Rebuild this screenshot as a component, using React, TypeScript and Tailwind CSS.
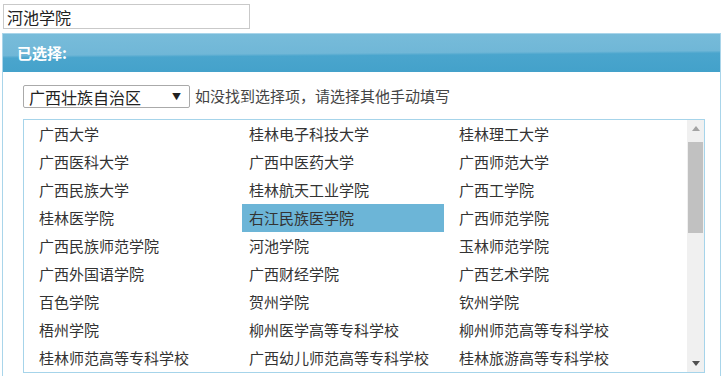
import { useState } from "react";

const SCHOOLS = [
  "广西大学", "桂林电子科技大学", "桂林理工大学",
  "广西医科大学", "广西中医药大学", "广西师范大学",
  "广西民族大学", "桂林航天工业学院", "广西工学院",
  "桂林医学院", "右江民族医学院", "广西师范学院",
  "广西民族师范学院", "河池学院", "玉林师范学院",
  "广西外国语学院", "广西财经学院", "广西艺术学院",
  "百色学院", "贺州学院", "钦州学院",
  "梧州学院", "柳州医学高等专科学校", "柳州师范高等专科学校",
  "桂林师范高等专科学校", "广西幼儿师范高等专科学校", "桂林旅游高等专科学校",
];

function Scrollbar() {
  return (
    <div className="w-[17px] shrink-0 bg-[#f0f0f0] flex flex-col items-center">
      <div className="h-[17px] w-full flex items-center justify-center">
        <svg width="8" height="5" viewBox="0 0 8 5">
          <path d="M0 5 L4 0 L8 5 Z" fill="#a3a3a3" />
        </svg>
      </div>
      <div className="mt-[5px] w-[15px] h-[91px] bg-[#c1c1c1]" />
      <div className="flex-1" />
      <div className="h-[17px] w-full flex items-center justify-center">
        <svg width="8" height="5" viewBox="0 0 8 5">
          <path d="M0 0 L8 0 L4 5 Z" fill="#505050" />
        </svg>
      </div>
    </div>
  );
}

export default function App() {
  const [selected, setSelected] = useState("右江民族医学院");

  return (
    <div className="w-[723px] h-[376px] overflow-hidden bg-white font-['Noto_Sans_CJK_SC','Noto_Sans',sans-serif] text-[#333]">
      <div className="pl-[3px] pt-[4px]">
        <input
          value="河池学院"
          readOnly
          className="block w-[247px] h-[25px] border border-[#c9c9c9] px-[3px] text-[16px] text-[#222] outline-none"
        />
      </div>

      <div className="mt-[4px] mx-[2px] border border-b-0 border-[#a9d5ea] h-[400px]">
        <div className="h-[38px] flex items-center pl-[14px] bg-[linear-gradient(179.6deg,#78bcda_0%,#70b7d7_50%,#4aa5cd_56%,#43a1ca_100%)]">
          <span className="text-[15px] font-bold text-white">已选择:</span>
        </div>

        <div className="pl-[20px] pt-[13px]">
          <div className="flex items-center gap-[5px]">
            <div className="w-[167px] h-[23px] border border-[#aaa] rounded-[2px] flex items-center justify-between pl-[5px] pr-[8px] text-[16px] text-[#222]">
              <span>广西壮族自治区</span>
              <span className="text-[9px] text-[#222]">▼</span>
            </div>
            <span className="text-[15px] text-[#444]">如没找到选择项，请选择其他手动填写</span>
          </div>

          <div className="mt-[11px] w-[682px] h-[254px] border border-[#a6d4ea] flex overflow-hidden">
            <div className="flex-1 grid grid-cols-[210px_210px_210px] content-start pl-[8px]">
              {SCHOOLS.map((s) => (
                <div
                  key={s}
                  onClick={() => setSelected(s)}
                  className={
                    s === selected
                      ? "w-[202px] h-[28px] leading-[28px] pl-[7px] text-[15px] whitespace-nowrap bg-[#6cb5d7] text-[#333] cursor-pointer"
                      : "w-[202px] h-[28px] leading-[28px] pl-[7px] text-[15px] whitespace-nowrap text-[#333] cursor-pointer"
                  }
                >
                  {s}
                </div>
              ))}
            </div>
            <Scrollbar />
          </div>
        </div>
      </div>
    </div>
  );
}
